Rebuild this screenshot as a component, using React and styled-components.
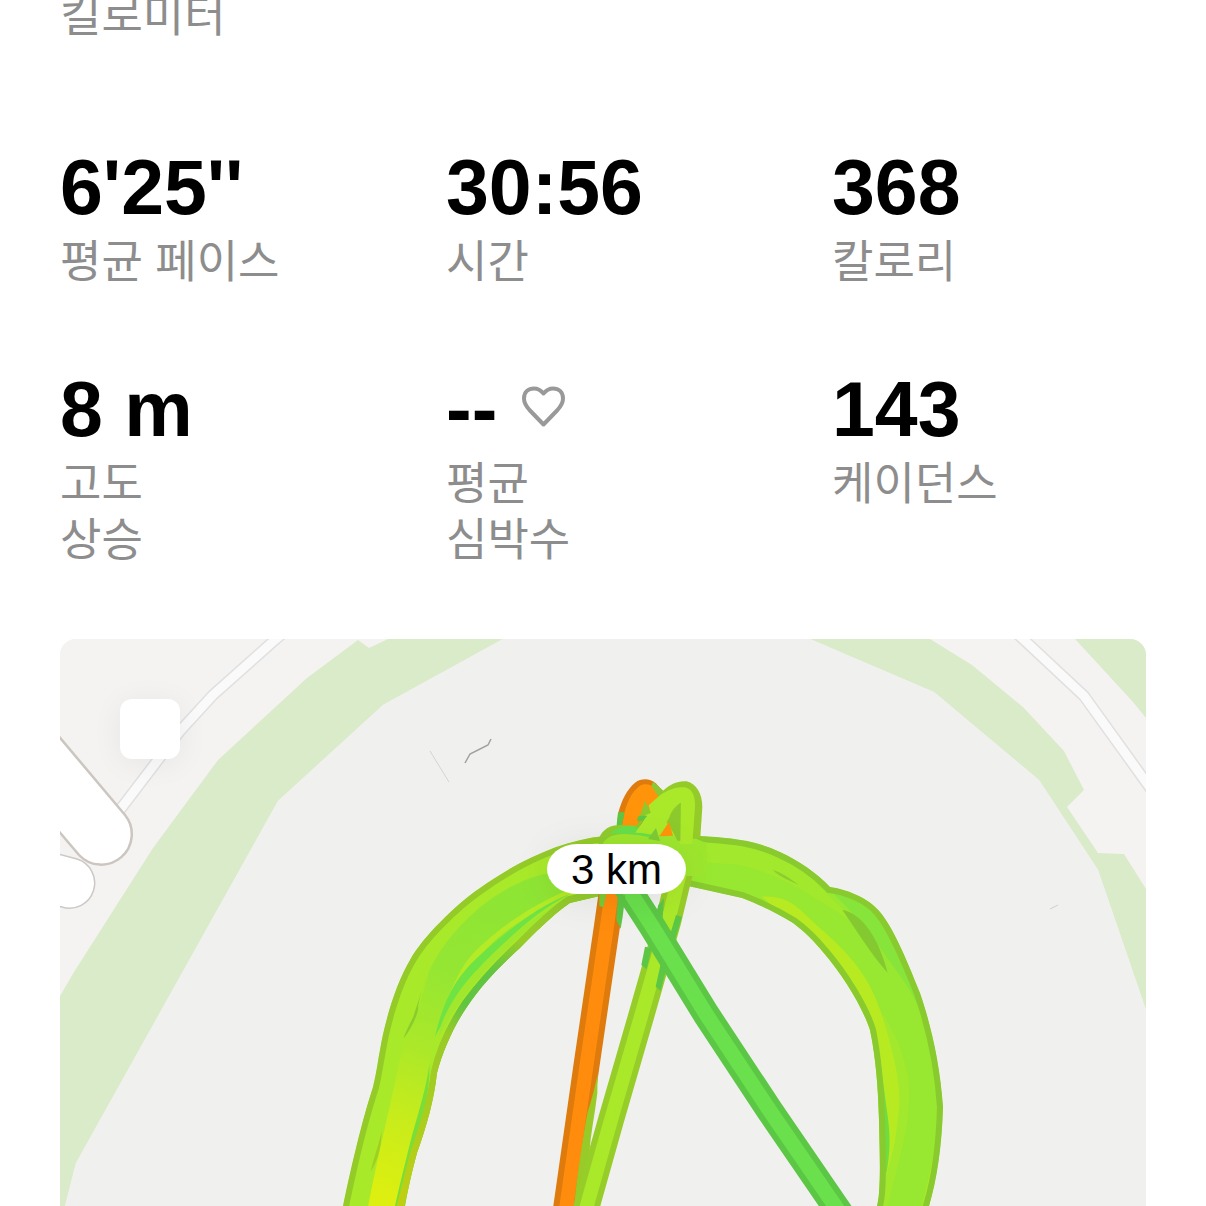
import React from "react";
import styled, { createGlobalStyle } from "styled-components";

const stats = [
  { id: "pace", value: "6'25''", label: ["평균 페이스"] },
  { id: "time", value: "30:56", label: ["시간"] },
  { id: "calories", value: "368", label: ["칼로리"] },
  { id: "elevation", value: "8 m", label: ["고도", "상승"] },
  { id: "heart", value: "--", label: ["평균", "심박수"], heart: true },
  { id: "cadence", value: "143", label: ["케이던스"] },
];

const leftBand =
  "M340 1216 L343 1206 C350 1172 362 1120 373 1087 C377 1070 378 1060 380 1050 C384 1025 395 985 410 960 C422 938 455 905 480 888 C515 863 560 840 605 836 L640 836 L640 894 L600 896 L570 903 C550 917 535 933 520 948 C500 966 480 987 467 1007 C455 1024 443 1050 437 1073 C434 1100 427 1125 417 1153 C411 1175 408 1190 405 1206 L402 1216 Z";

const rightBand =
  "M620 836 L700 836 C725 838 750 838 780 852 C798 860 817 873 830 887 C845 889 868 897 880 912 C892 926 905 955 920 993 C930 1022 940 1062 943 1107 C942 1145 937 1180 929 1206 L926 1216 L874 1216 L877 1206 C881 1190 880 1160 879 1120 C878 1085 876 1060 870 1030 C863 1008 843 975 823 952 C815 942 804 931 793 923 C775 912 760 905 742 898 L688 886 L620 886 Z";

const HeartIcon = () => (
  <Heart viewBox="0 0 46 44" aria-hidden="true">
    <path d="M22.500 39.500 L8.500 25 C4.500 20.500 3 17.500 3 13.500 C3 7 7.500 3.500 13 3.500 C17.500 3.500 20 5.500 22.500 8.500 C25 5.500 27.500 3.500 32 3.500 C37.500 3.500 42 7 42 13.500 C42 17.500 40.500 20.500 36.500 25 Z" />
  </Heart>
);

const Tube = ({ d, edge, color, width = 27, core = 15 }) => (
  <g fill="none" strokeLinejoin="round">
    <path d={d} stroke={edge} strokeWidth={width} />
    <path d={d} stroke={color} strokeWidth={core} />
  </g>
);

const MapGround = () => (
  <g>
    <rect x="-1000" y="639" width="3200" height="2000" fill="#f4f3f2" />
    {/* roads */}
    <g fill="none" strokeLinejoin="round">
      <path d="M296 622 L276 639 L213 695 L180 731 L116 815" stroke="#e1e0e0" strokeWidth="12" />
      <path d="M296 622 L276 639 L213 695 L180 731 L116 815" stroke="#fafafa" strokeWidth="9" />
      <path d="M1004 622 L1023 639 L1084 696 L1156 796" stroke="#e1e0df" strokeWidth="12" />
      <path d="M1004 622 L1023 639 L1084 696 L1156 796" stroke="#fafafa" strokeWidth="9" />
    </g>
    {/* buildings */}
    <path
      d="M40 849 L77 859 A25 25 0 1 1 62 907 L40 902 Z"
      fill="#fff"
      stroke="#ccc8c6"
      strokeWidth="1.500"
    />
    <path
      d="M40 714 L125 815 A30.500 30.500 0 0 1 79 855 L40 809 Z"
      fill="#fff"
      stroke="#cbc6c0"
      strokeWidth="2.500"
    />
    {/* park */}
    <g fill="#d9ebc9">
      <path d="M503 639 L388 639 L369 648 L358 640 L307 678 L218 760 L153 848 L74 972 L60 996 L60 1206 L65 1206 L76 1163 L278 801 L383 705 Z" />
      <path d="M810 639 L930 639 L972 665 L1023 707 L1064 751 L1084 790 L1067 807 L1098 853 L1124 854 L1146 889 L1146 1010 L1098 870 L1039 780 L934 692 Z" />
      <path d="M1075 639 L1146 639 L1146 718 L1133 702 Z" />
    </g>
    <path
      d="M503 639 L383 705 L278 801 L76 1163 L65 1206 L65 2400 L1146 2400 L1146 1010 L1098 870 L1039 780 L934 692 L865 663 L810 639 Z"
      fill="#f0f0ee"
    />
    <g fill="none">
      <path d="M430 751 L449 782" stroke="#d4d4d3" />
      <path d="M491 739 L488 745 L470 754 L465 763" stroke="#a0a0a0" strokeWidth="1.500" />
      <path d="M1050 909 L1058 905" stroke="#cfcfce" />
    </g>
  </g>
);

const Route = () => (
  <g>
    <defs>
      <clipPath id="leftBand">
        <path d={leftBand} />
      </clipPath>
      <clipPath id="rightBand">
        <path d={rightBand} />
      </clipPath>
      <linearGradient id="leftCore" gradientUnits="userSpaceOnUse" x1="480" y1="240" x2="165" y2="1120">
        <stop offset="0" stopColor="#8fe534" />
        <stop offset="0.25" stopColor="#94e633" />
        <stop offset="0.52" stopColor="#abe829" />
        <stop offset="0.76" stopColor="#c8ec1b" />
        <stop offset="1" stopColor="#dcef10" />
      </linearGradient>
      <linearGradient id="leftInner" gradientUnits="userSpaceOnUse" x1="690" y1="240" x2="225" y2="1158">
        <stop offset="0" stopColor="#92cb2c" />
        <stop offset="0.16" stopColor="#96cb29" />
        <stop offset="0.28" stopColor="#5fc542" />
        <stop offset="0.4" stopColor="#62c541" />
        <stop offset="0.5" stopColor="#98cb28" />
        <stop offset="1" stopColor="#bfd012" />
      </linearGradient>
    </defs>

    {/* laps around the left side */}
    <g clipPath="url(#leftBand)">
      <path d={leftBand} fill="#a8e92a" stroke="#94cb29" strokeWidth="12" />
      <g transform="translate(330 820) scale(.3333)">
        <path
          d="M680 155 C600 165 520 205 450 262 C370 330 320 400 295 460 C265 590 225 650 205 740 C180 860 150 980 110 1180 L198 1180 C235 1010 285 860 298 735 C310 640 355 530 425 440 C500 350 600 270 720 215 Z"
          fill="url(#leftCore)"
        />
        <path d="M730 205 C620 245 500 325 425 405 C395 440 370 490 352 540 C400 450 480 370 540 325 C600 285 670 245 740 222 Z" fill="#b4ea26" />
        <path d="M720 222 C620 260 520 340 440 415 C380 470 340 540 315 650 C350 590 380 520 440 455 C510 380 600 285 720 222 Z" fill="#6fe343" />
        <path d="M745 226 C650 258 540 345 450 440 C390 500 355 560 335 610 L322 660 C355 590 400 530 450 470 C560 350 650 270 745 226 Z" fill="#a0e72e" />
        <path d="M293 465 C275 510 262 555 250 590 C240 610 225 640 221 655 C240 630 255 605 264 570 C264 540 280 500 293 465 Z" fill="#8acc2c" />
        <path d="M155 930 C150 965 135 1000 122 1055 C138 1030 155 990 155 930 Z" fill="#9fcf20" />
        <path d="M298 733 C290 800 265 880 245 950 C225 1030 205 1110 190 1180 L205 1180 C220 1110 250 1010 270 920 C290 850 300 790 298 733 Z" fill="#79df38" />
        <path
          d="M810 217 L715 240 C655 282 615 325 566 373 C506 430 450 490 405 552 C370 605 330 680 314 757 C305 840 280 920 253 995 C235 1060 225 1110 205 1180"
          fill="none"
          stroke="url(#leftInner)"
          strokeWidth="22"
        />
      </g>
    </g>

    {/* laps around the right side */}
    <g clipPath="url(#rightBand)">
      <path d={rightBand} fill="#98e730" />
      <g transform="translate(680 820) scale(.3333)">
        <path d="M-180 60 L60 60 C210 70 320 110 400 180 L470 250 L550 330 C420 240 300 160 180 135 L-180 110 Z" fill="#a2e82c" />
        <path d="M450 210 C530 220 590 270 630 350 C670 430 700 500 715 560 C690 500 640 440 590 370 C550 310 500 260 450 210 Z" fill="#86e43a" />
        <path d="M620 1180 C640 1060 700 930 685 780 C670 670 620 600 570 520 L580 700 L600 1180 Z" fill="#a2e82c" />
        <path d="M245 230 C330 225 360 270 420 325 C520 410 570 480 600 570 C640 690 660 780 658 850 C650 950 640 1000 620 1060 L605 900 L585 680 L530 540 L430 400 L340 310 Z" fill="#b8ea22" />
        <path d="M598 700 C605 750 615 830 622 880 C632 950 630 1000 620 1055 L606 1050 L606 780 Z" fill="#6fdc40" />
        <path d="M487 270 C530 275 590 330 623 458 C570 400 530 330 487 270 Z" fill="#84c930" />
        <path d="M278 149 C310 160 330 175 357 195 C330 182 300 172 278 149 Z" fill="#8bce30" />
        <path d="M765 980 C755 1040 740 1100 720 1180 L745 1180 L770 1050 Z" fill="#a9e928" />
      </g>
      <path d={rightBand} fill="none" stroke="#89ca2e" strokeWidth="12" />
    </g>

    {/* straight legs below the crossing */}
    <Tube d="M613 884 L607 926 L587 1062 L565 1216" edge="#de7b0c" color="#ff8c0d" width={26} core={14} />
    <g transform="translate(520 920) scale(.3333)">
      <path d="M233 462 L232 520 C225 580 212 640 208 700 L180 880 L160 880 C170 780 185 670 203 575 C215 540 225 500 233 462 Z" fill="#98cb28" />
    </g>
    <Tube d="M680 872 L668 922 L640 1020 L611 1120 L584 1216" edge="#97cd29" color="#aae92a" width={26} core={14} />
    <g transform="translate(590 770) scale(.3333)">
      <path d="M258 435 L276 440 L252 520 L236 508 Z" fill="#5cc645" />
      <path d="M165 530 L185 535 L170 597 L154 585 Z" fill="#5cc645" />
      <path d="M205 405 L222 385 L216 470 L196 440 Z" fill="#5cc645" />
      <path d="M212 582 L228 600 L212 662 L197 650 Z" fill="#5cc645" />
    </g>
    <Tube d="M621 878 L652 926 L706 1014 L770 1111 L842 1216" edge="#5cc645" color="#69e04c" width={27} core={15} />

    {/* crossing at the start of every lap */}
    <g transform="translate(590 770) scale(.3333)">
      <path d="M28 368 L50 368 L40 412 L28 408 Z" fill="#7acb38" />
      <path d="M84 372 L106 376 L98 440 L92 476 L79 450 Z" fill="#5cc645" />

      <path d="M80 175 L85 128 C95 90 110 60 135 38 C155 24 180 25 197 40 L218 62 L205 120 L150 185 Z" fill="#de7b0c" />
      <path d="M94 175 L103 128 C113 90 130 60 150 47 C163 40 180 42 188 50 L208 78 L178 125 L150 145 L138 180 Z" fill="#ff940b" />
      <path d="M189 35 L220 62 L206 80 L184 48 Z" fill="#8bc934" />
      <path d="M84 127 L104 127 L96 165 L80 165 Z" fill="#5cc645" />
      <path d="M165 130 L215 90 L262 120 L262 212 L150 212 Z" fill="#aae92a" />

      <path d="M26 206 C38 178 60 165 90 165 L160 168 L196 198 L290 200 L290 240 L26 240 Z" fill="#8fcc2c" />
      <path d="M-20 245 L36 224 C48 202 70 192 100 192 L300 198 L350 220 L350 318 L-20 318 Z" fill="#9de62e" />
      <path d="M60 192 C75 175 95 167 125 167 C155 172 185 182 190 206 C150 192 100 190 60 192 Z" fill="#66df49" />

      <path d="M206 80 L219 62 C240 42 265 31 290 34 C320 42 336 70 337 110 L331 204 L300 208 L262 206 L225 150 Z" fill="#94cb29" />
      <path d="M136 188 C158 155 170 138 182 128 L176 106 L210 76 C235 58 260 49 285 52 C308 57 316 80 315 110 L307 222 L270 222 L272 98 C254 110 244 122 238 142 L206 198 L160 190 Z" fill="#aae92a" />
      <path d="M272 98 L242 136 L236 155 L262 212 L271 212 Z" fill="#8cc92d" />
      <path d="M237 156 L249 197 L208 199 Z" fill="#ff940b" />
      <path d="M165 92 L183 128 L148 144 Z" fill="#8cc92d" />
      <path d="M146 137 L172 137 L160 152 L140 152 Z" fill="#5cc645" />
      <path d="M150 152 L160 152 L145 174 L134 174 Z" fill="#8cc92d" />
      <path d="M198 174 L210 213 L174 207 Z" fill="#7dcb35" />
    </g>
  </g>
);

const App = () => {
  return (
    <>
      <GlobalStyle />
      <Page>
        <Distance>
          <Label>킬로미터</Label>
        </Distance>

        <Stats>
          {stats.map(({ id, value, label, heart }) => (
            <Stat key={id}>
              <Value>
                {value}
                {heart && <HeartIcon />}
              </Value>
              {label.map((line) => (
                <Label as="dt" key={line}>
                  {line}
                </Label>
              ))}
            </Stat>
          ))}
        </Stats>

        <MapCard>
          <MapDrawing viewBox="60 639 1086 567" preserveAspectRatio="xMidYMin slice" aria-hidden="true">
            <MapGround />
            <Route />
          </MapDrawing>
          <MapButton type="button" aria-label="지도" />
          <KmBadge>3 km</KmBadge>
        </MapCard>
      </Page>
    </>
  );
};

const GlobalStyle = createGlobalStyle`
  * {
    box-sizing: border-box;
  }
  body {
    margin: 0;
    background: #fff;
    font-family: "Liberation Sans", "Noto Sans CJK KR", sans-serif;
  }
`;

const Page = styled.main`
  display: flex;
  flex-direction: column;
  height: 100vh;
  padding: 0 60px;
  overflow: hidden;
`;

const Distance = styled.header`
  display: flex;
  flex: none;
  align-items: flex-end;
  height: 45px;
  margin-bottom: 94px;
`;

const Stats = styled.dl`
  display: grid;
  flex: none;
  grid-template-columns: repeat(3, 1fr);
  gap: 70px 72px;
  margin: 0 0 70px;
`;

const Stat = styled.div`
  display: flex;
  flex-direction: column;
`;

const Value = styled.dd`
  display: flex;
  align-items: center;
  gap: 24px;
  margin: 0;
  color: #000;
  font-size: 77px;
  font-weight: bold;
  line-height: 96px;
  white-space: nowrap;
`;

const Label = styled.div`
  color: #8d8d8d;
  font-size: 45px;
  line-height: 56px;
  white-space: nowrap;
`;

const Heart = styled.svg`
  width: 46px;
  height: 44px;
  margin-bottom: 4px;
  fill: none;
  stroke: #999;
  stroke-width: 4;
  stroke-linejoin: round;
`;

const MapCard = styled.section`
  position: relative;
  flex: 1;
  min-height: 0;
  overflow: hidden;
  border-radius: 16px 16px 0 0;
  background: #f4f3f2;
`;

const MapDrawing = styled.svg`
  display: block;
  width: 100%;
  height: 100%;
`;

const MapButton = styled.button`
  position: absolute;
  top: 60px;
  left: 60px;
  width: 60px;
  height: 60px;
  padding: 0;
  border: none;
  border-radius: 12px;
  background: #fff;
  box-shadow: 0 4px 32px rgba(0, 0, 0, 0.06);
  cursor: pointer;
`;

const KmBadge = styled.div`
  position: absolute;
  top: 205px;
  left: 487px;
  padding: 1px 24px 0;
  border-radius: 30px / 25px;
  background: #fff;
  box-shadow: 0 4px 40px rgba(0, 0, 0, 0.08);
  color: #000;
  font-size: 42px;
  line-height: 49px;
  white-space: nowrap;
`;

export default App;
